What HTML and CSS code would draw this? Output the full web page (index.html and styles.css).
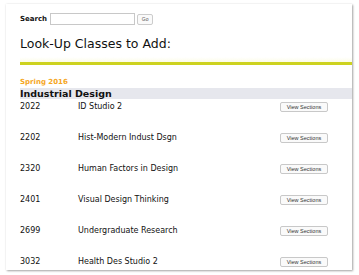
FILE: index.html
```html
<!doctype html>
<html>
<head>
	<meta charset="utf-8" />
	<title>Look-Up Classes</title>
	<link rel="stylesheet" href="styles.css">
</head>
<body>
	<div class="card">
		<form class="search">
			<label>Search</label>
			<input type="text" class="search-box">
			<button type="button" class="go">Go</button>
		</form>
		<h1 class="title">Look-Up Classes to Add:</h1>
		<div class="rule"></div>
		<div class="term">Spring 2016</div>
		<div class="subject">Industrial Design</div>
		<table class="courses">
			<tr>
				<td class="num">2022</td>
				<td class="name">ID Studio 2</td>
				<td class="act"><button type="button">View Sections</button></td>
			</tr>
			<tr>
				<td class="num">2202</td>
				<td class="name">Hist-Modern Indust Dsgn</td>
				<td class="act"><button type="button">View Sections</button></td>
			</tr>
			<tr>
				<td class="num">2320</td>
				<td class="name">Human Factors in Design</td>
				<td class="act"><button type="button">View Sections</button></td>
			</tr>
			<tr>
				<td class="num">2401</td>
				<td class="name">Visual Design Thinking</td>
				<td class="act"><button type="button">View Sections</button></td>
			</tr>
			<tr>
				<td class="num">2699</td>
				<td class="name">Undergraduate Research</td>
				<td class="act"><button type="button">View Sections</button></td>
			</tr>
			<tr>
				<td class="num">3032</td>
				<td class="name">Health Des Studio 2</td>
				<td class="act"><button type="button">View Sections</button></td>
			</tr>
		</table>
	</div>
</body>
</html>
```
FILE: styles.css
```css
html, body
{
	margin: 0;
	background: #fff;
}

body
{
	padding: 4px 7px 5px 6px;
	font-family: "DejaVu Sans", Verdana, sans-serif;
	color: #111;
}

.card
{
	height: 266px;
	background: #fff;
	box-shadow: 1px 1px 2px rgba(0, 0, 0, 0.35), 0 0 2px rgba(0, 0, 0, 0.08);
	padding-left: 14px;
	overflow: hidden;
}

.search
{
	display: flex;
	align-items: center;
	margin: 0;
	padding-top: 9px;
	height: 12px;
	font-size: 7px;
}

.search label
{
	font-weight: bold;
	margin-right: 3px;
}

.search-box
{
	width: 83px;
	height: 10px;
	padding: 0;
	border: 1px solid #c8c8c8;
	margin: 0 2px 0 0;
}

.go
{
	height: 11px;
	width: 16px;
	padding: 0;
	font-size: 5px;
	font-family: "Liberation Sans", Arial, sans-serif;
	background: #fafafa;
	border: 1px solid #ccc;
	border-radius: 2px;
	color: #555;
}

.title
{
	margin: 0;
	padding-top: 10px;
	font-size: 12.5px;
	font-weight: normal;
	line-height: 18px;
	color: #111;
}

.rule
{
	margin-top: 4px;
	height: 5px;
	background: linear-gradient(#fff, #fcfce8);
	border-bottom: 3px solid #cdd21f;
}

.term
{
	padding-top: 12px;
	font-size: 7px;
	line-height: 10px;
	font-weight: bold;
	color: #f5a623;
}

.subject
{
	margin-top: 1px;
	background: #e6e7ed;
	font-size: 9.5px;
	font-weight: bold;
	line-height: 11px;
	color: #111;
}

.courses
{
	border-collapse: collapse;
	font-size: 8px;
	width: 100%;
	margin-top: 3px;
}

.courses td
{
	padding: 0;
	height: 31px;
	vertical-align: top;
	line-height: 10px;
}

.num
{
	width: 58px;
}

.name
{
	width: 202px;
}

.act button
{
	display: block;
	height: 10px;
	width: 48px;
	padding: 0;
	font-size: 5.5px;
	font-family: "Liberation Sans", Arial, sans-serif;
	background: #fafafa;
	border: 1px solid #c8c8c8;
	border-radius: 2px;
	color: #333;
}
```
